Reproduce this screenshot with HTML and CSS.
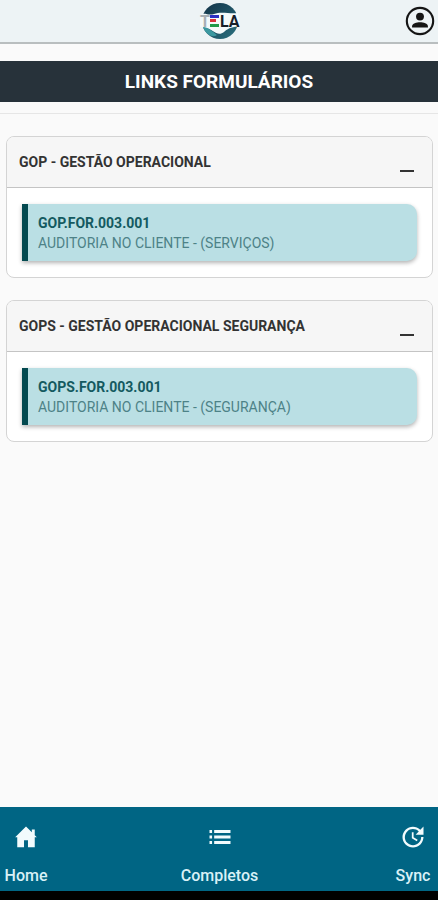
FILE: index.html
```html
<!DOCTYPE html>
<html lang="pt-BR">
<head>
    <meta charset="UTF-8">
    <meta name="viewport" content="width=device-width, initial-scale=1.0">
    <title>Links Formulários</title>
    <link rel="stylesheet" href="styles.css">
</head>
<body>
    <header class="header">
        <a href="#" class="logo" aria-label="Tela">
            <svg width="44" height="38" viewBox="0 0 44 38">
                <defs>
                    <linearGradient id="fundo" x1="0" y1="0" x2="1" y2="1">
                        <stop offset="0" stop-color="#123247"/>
                        <stop offset="1" stop-color="#2b7180"/>
                    </linearGradient>
                </defs>
                <circle cx="23" cy="19" r="18" fill="url(#fundo)"/>
                <path d="M3 13C8 10 11 14 17 12C24 9 32 12 41 11L43 25C36 24 30 27 27 30C23 33 20 32 14 28C9 25 5 26 3 25Z" fill="#f4fafb"/>
                <path d="M6 25C11 25 15 29 20 33C15 37 8 31 6 25Z" fill="#3b98a0"/>
                <text class="logo-t" x="3" y="25">T</text>
                <path d="M13 13h9v3h-9z" fill="#2b2fc4"/>
                <path d="M13 17h6v3h-6z" fill="#d8323c"/>
                <path d="M13 22h9v3h-9z" fill="#1f9a4a"/>
                <text class="logo-la" x="23" y="25">LA</text>
            </svg>
        </a>
        <button type="button" class="btn-user" aria-label="Usuário">
            <svg width="34" height="34" viewBox="0 0 24 24">
                <circle cx="12" cy="12" r="9.3" fill="none" stroke="#151515" stroke-width="1.5"/>
                <circle cx="12" cy="8.9" r="2.8" fill="#151515"/>
                <path d="M6.4 16.6V15.8C6.4 13.8 9.6 12.9 12 12.9S17.600 13.800 17.600 15.800V16.600Z" fill="#151515"/>
            </svg>
        </button>
    </header>

    <main class="content">
        <h1>LINKS FORMULÁRIOS</h1>

        <div class="list">
            <section class="card">
                <div class="card-header">
                    <h2>GOP - GESTÃO OPERACIONAL</h2>
                    <button type="button" class="btn-toggle" aria-label="Recolher"></button>
                </div>
                <div class="card-body">
                    <a href="#" class="item">
                        <strong>GOP.FOR.003.001</strong>
                        <span>AUDITORIA NO CLIENTE - (SERVIÇOS)</span>
                    </a>
                </div>
            </section>

            <section class="card">
                <div class="card-header">
                    <h2>GOPS - GESTÃO OPERACIONAL SEGURANÇA</h2>
                    <button type="button" class="btn-toggle" aria-label="Recolher"></button>
                </div>
                <div class="card-body">
                    <a href="#" class="item">
                        <strong>GOPS.FOR.003.001</strong>
                        <span>AUDITORIA NO CLIENTE - (SEGURANÇA)</span>
                    </a>
                </div>
            </section>
        </div>
    </main>

    <nav class="navbar">
        <a href="#">
            <svg width="28" height="28" viewBox="0 0 24 24">
                <path d="M12 3L2.700 12.300H4.500V20.800H10.300V14.800H13.700V20.800H19.500V12.300H21.300L19.500 10.500V5.500H17V8Z"/>
            </svg>
            Home
        </a>
        <a href="#">
            <svg width="28" height="28" viewBox="0 0 24 24">
                <path d="M3 6h2.200v2.600H3zM3 10.700h2.200v2.600H3zM3 15.400h2.200V18H3zM7 6h14v2.600H7zM7 10.700h14v2.600H7zM7 15.400h14V18H7z"/>
            </svg>
            Completos
        </a>
        <a href="#">
            <svg width="28" height="28" viewBox="0 0 24 24">
                <path d="M21 10.120h-6.780l2.740-2.820c-2.730-2.700-7.150-2.800-9.880-.1-2.730 2.710-2.730 7.080 0 9.790s7.150 2.710 9.880 0C18.320 15.650 19 14.080 19 12.100h2c0 1.980-.88 4.550-2.640 6.290-3.510 3.480-9.210 3.480-12.720 0-3.500-3.470-3.530-9.110-.02-12.580s9.140-3.470 12.650 0L21 3v7.120zM12.500 8v4.250l3.500 2.080-.72 1.210L11 13V8h1.500z"/>
            </svg>
            Sync
        </a>
    </nav>
</body>
</html>
```

FILE: styles.css
```css
* {
    box-sizing: border-box;
}

body {
    margin: 0;
    min-height: 100vh;
    display: flex;
    flex-direction: column;
    font-family: Roboto, "Liberation Sans", sans-serif;
    background-color: #fafafa;
}

a {
    text-decoration: none;
}

button {
    padding: 0;
    border: none;
    background: none;
    cursor: pointer;
}

svg {
    display: block;
}

.header {
    display: grid;
    grid-template-columns: 1fr auto 1fr;
    align-items: center;
    height: 44px;
    background-color: #edf3f5;
    border-bottom: 2px solid #b9bebf;
}

.logo {
    grid-column: 2;
}

.logo-t, .logo-la {
    font-size: 16px;
    font-weight: bold;
}

.logo-t {
    fill: #a9b0b5;
}

.logo-la {
    fill: #17202a;
}

.btn-user {
    justify-self: end;
    margin-right: 1px;
}

.content {
    flex: 1;
    padding-top: 17px;
}

h1 {
    margin: 0;
    padding: 9px 8px 8px;
    font-size: 19px;
    line-height: 24px;
    font-weight: bold;
    text-align: center;
    color: #fff;
    background-color: #27323a;
}

.list {
    display: flex;
    flex-direction: column;
    gap: 22px;
    margin-top: 11px;
    padding: 22px 5px 22px 6px;
    border-top: 1px solid #e6e6e6;
}

.card {
    border: 1px solid #d4d4d4;
    border-radius: 8px;
    background-color: #fff;
    overflow: hidden;
}

.card-header {
    display: flex;
    align-items: center;
    justify-content: space-between;
    height: 51px;
    padding: 0 18px 0 12px;
    background-color: #f6f6f6;
    border-bottom: 1px solid #c4c4c4;
}

h2 {
    margin: 0;
    font-size: 14px;
    line-height: 20px;
    font-weight: bold;
    color: #333;
}

.btn-toggle {
    width: 14px;
    height: 20px;
    border-bottom: 2px solid #333;
}

.card-body {
    padding: 16px 15px;
}

.item {
    display: block;
    padding: 9px 10px 8px;
    border-left: 6px solid #044a50;
    border-radius: 0 10px 10px 0;
    font-size: 14px;
    line-height: 20px;
    color: #4d8287;
    background-color: #badfe4;
    box-shadow: 0 2px 4px rgba(0, 0, 0, 0.3);
}

.item strong, .item span {
    display: block;
}

.item strong {
    color: #145a60;
}

.navbar {
    display: flex;
    justify-content: space-between;
    padding: 16px 3px 4px 4px;
    background-color: #006584;
    border-bottom: 9px solid #000;
}

.navbar a {
    display: flex;
    flex-direction: column;
    align-items: center;
    gap: 14px;
    min-width: 44px;
    font-size: 16px;
    line-height: 22px;
    font-weight: 500;
    color: #d9f1f7;
}

.navbar svg {
    fill: #f2fbfd;
}
```
